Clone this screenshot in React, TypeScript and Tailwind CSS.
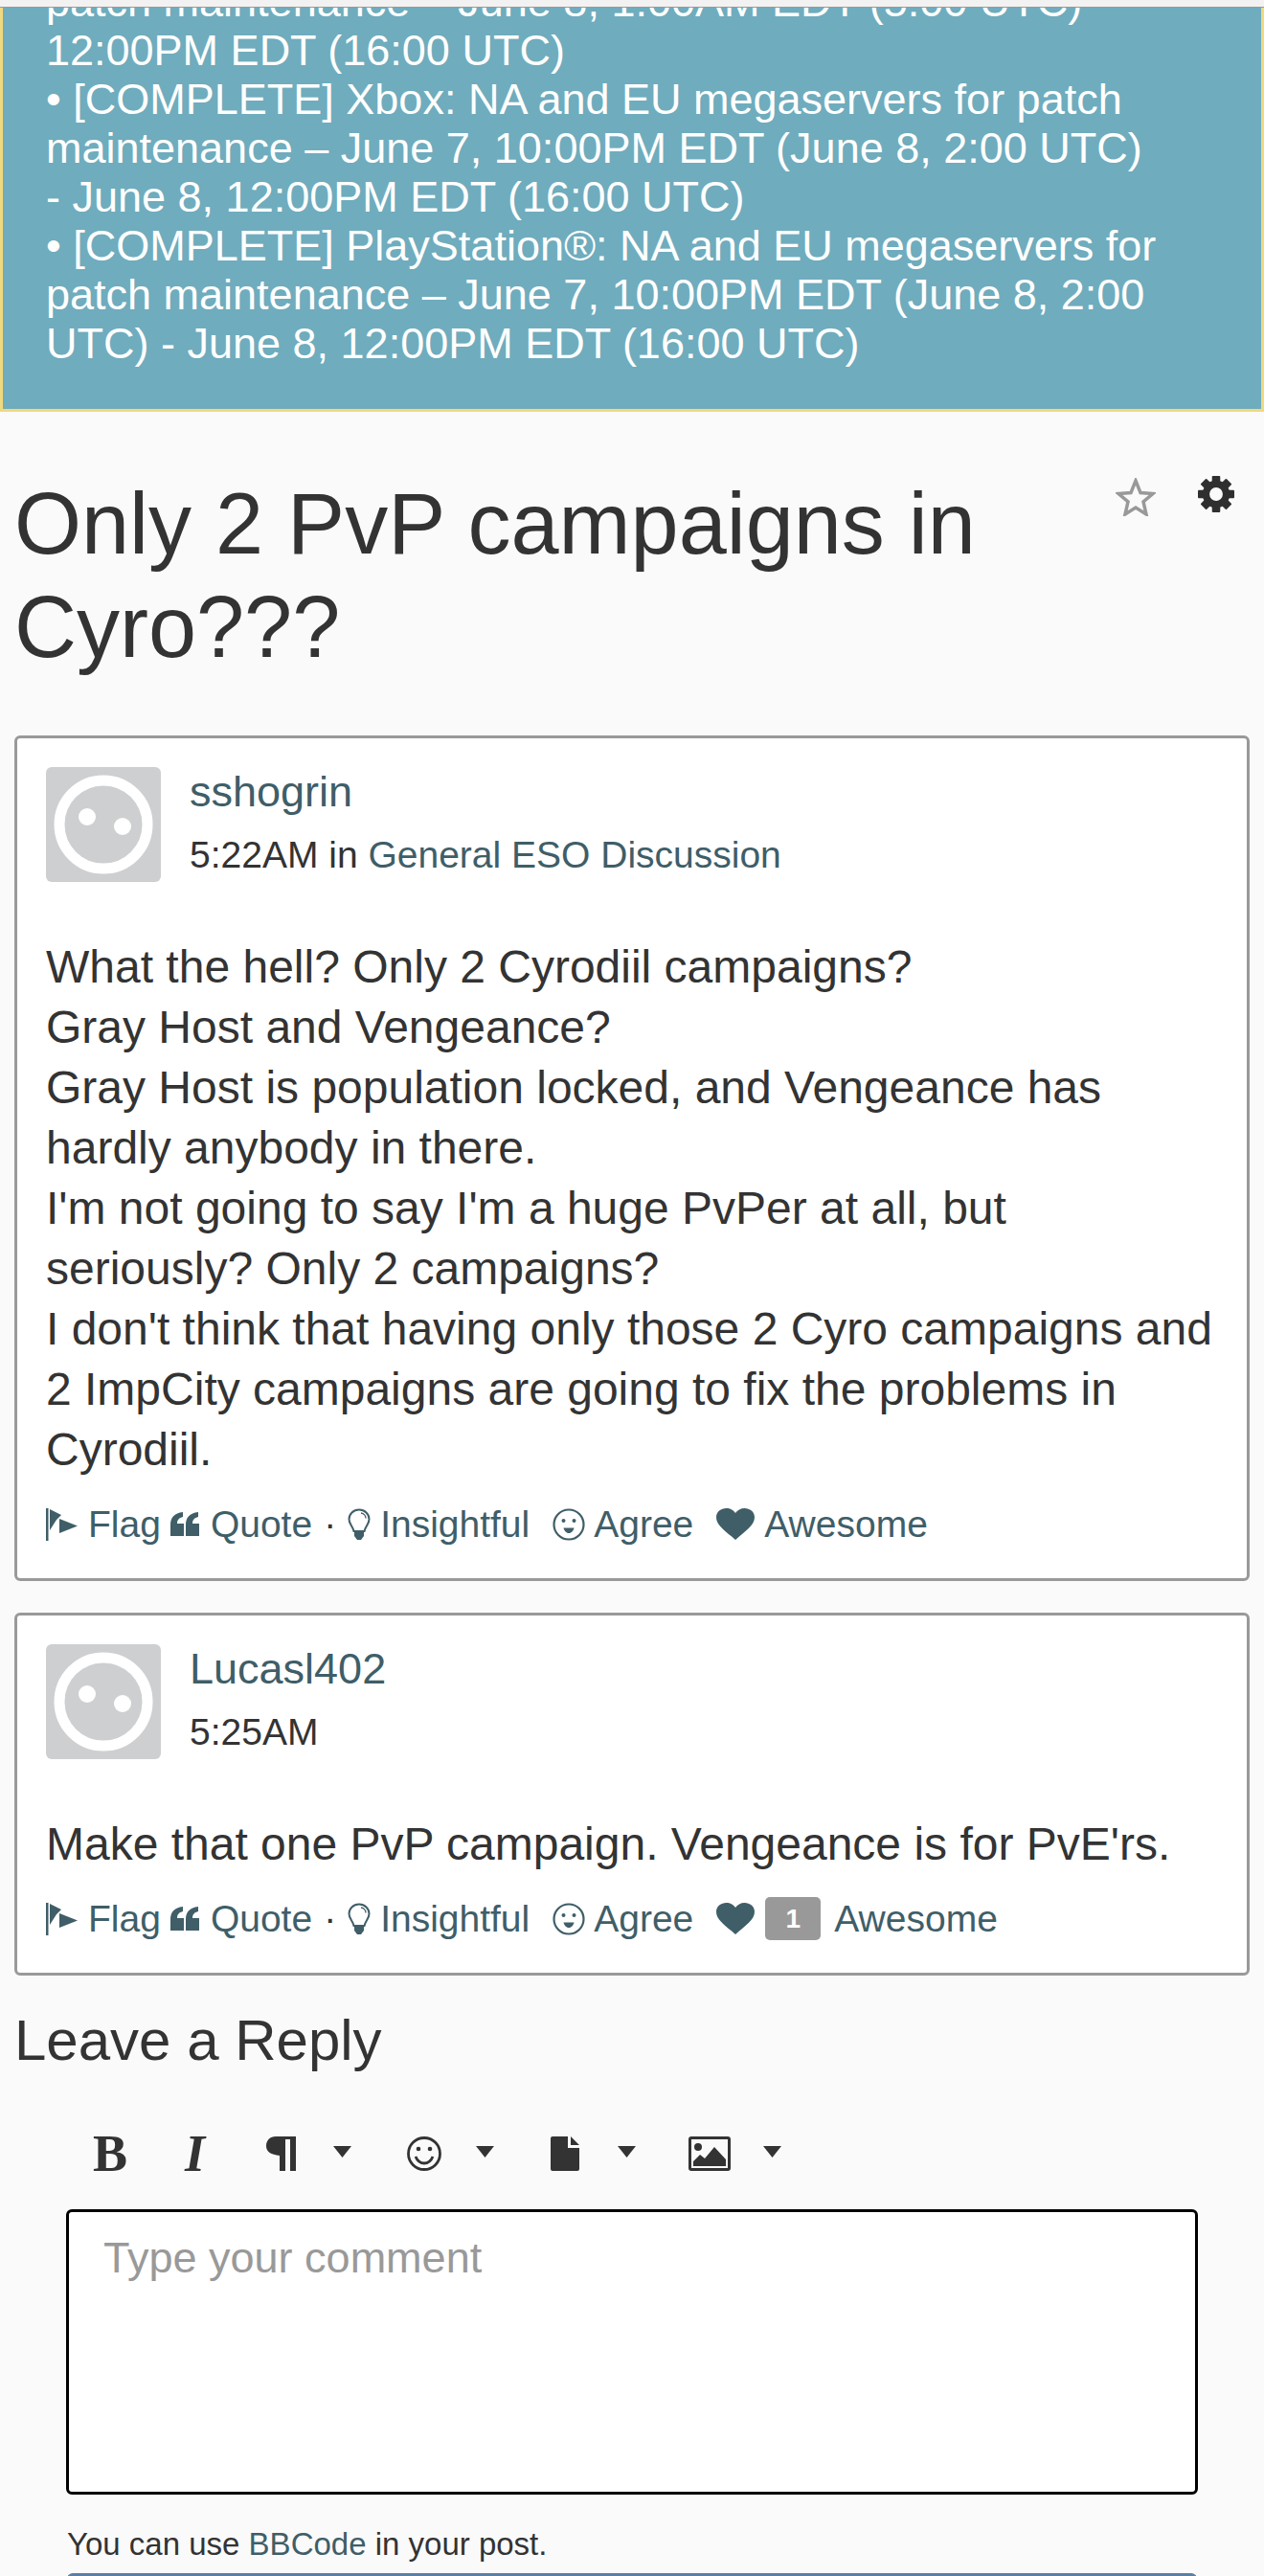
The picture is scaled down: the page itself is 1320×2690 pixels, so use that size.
import React from "react";

const font = "font-['Liberation_Sans',Arial,sans-serif]";

function Avatar() {
  return (
    <div className="w-[120px] h-[120px] shrink-0 rounded-[6px] bg-[#cdcfd1]">
      <svg viewBox="0 0 120 120" className="w-full h-full">
        <circle cx="60" cy="60" r="46" fill="none" stroke="#fff" strokeWidth="11" />
        <circle cx="43" cy="52" r="9" fill="#fff" />
        <circle cx="80" cy="62" r="9" fill="#fff" />
      </svg>
    </div>
  );
}

function FlagIcon() {
  return (
    <svg viewBox="0 0 34 34" className="w-[34px] h-[34px] shrink-0" fill="#3f5e68">
      <rect x="0" y="0" width="2.500" height="34" />
      <polygon points="4,1 16,7 11,12 4,23" />
      <polygon points="14,11 33,18.500 14,26" />
    </svg>
  );
}

function QuoteIcon() {
  return (
    <svg viewBox="0 0 30 25" className="block w-[30px] h-[25px] shrink-0" fill="#3f5e68">
      <path d="M0 25V13C0 6 4 1 13 0v5C9 6 7 8 7 12H14v13z" />
      <path d="M16 25V13C16 6 20 1 29 0v5C25 6 23 8 23 12H30v13z" />
    </svg>
  );
}

function BulbIcon() {
  return (
    <svg viewBox="0 0 24 34" className="w-[24px] h-[34px] shrink-0">
      <path d="M12 1.500C6 1.500 1.500 6 1.500 11.500c0 5 4 7.500 5 12.500h11c1-5 5-7.500 5-12.500C22.500 6 18 1.500 12 1.500z" fill="none" stroke="#3f5e68" strokeWidth="2" />
      <path d="M14 5c3 .5 5 3 5 5.500" fill="none" stroke="#3f5e68" strokeWidth="1.300" />
      <path d="M7 24h10v5l-3 4h-4l-3-4z" fill="#3f5e68" />
    </svg>
  );
}

function SmileIcon() {
  return (
    <svg viewBox="0 0 34 34" className="block w-[34px] h-[34px] shrink-0">
      <circle cx="17" cy="17" r="15.500" fill="none" stroke="#3f5e68" strokeWidth="2.200" />
      <circle cx="11.500" cy="13" r="2" fill="#3f5e68" />
      <circle cx="22.500" cy="13" r="2" fill="#3f5e68" />
      <path d="M11.500 20.500h11c-1 4-3.500 5.500-5.500 5.500s-4.500-1.500-5.500-5.500z" fill="#3f5e68" />
    </svg>
  );
}

function HeartIcon() {
  return (
    <svg viewBox="0 0 40 33" className="block w-[40px] h-[33px] shrink-0" fill="#3f5e68">
      <path d="M20 33C10 24 0 18 0 9.500 0 3.500 5 0 10.500 0 14.500 0 18 2 20 5 22 2 25.500 0 29.500 0 35 0 40 3.500 40 9.500 40 18 30 24 20 33z" />
    </svg>
  );
}

function Actions({ count }: { count?: number }) {
  const link = "text-[39px] leading-[51px] text-[#3f5e68]";
  return (
    <div className={`flex items-center h-[51px] ${link}`}>
      <FlagIcon />
      <span className="ml-[10px]">Flag</span>
      <span className="ml-[10px]"><QuoteIcon /></span>
      <span className="ml-[12px]">Quote</span>
      <span className="mx-[12px] text-[#333]">·</span>
      <BulbIcon />
      <span className="ml-[10px]">Insightful</span>
      <span className="ml-[24px]"><SmileIcon /></span>
      <span className="ml-[9px]">Agree</span>
      <span className="ml-[24px]"><HeartIcon /></span>
      {count ? (
        <span className="ml-[11px] w-[58px] h-[45px] rounded-[5px] bg-[#999] text-white text-[28px] font-bold leading-[45px] text-center">
          {count}
        </span>
      ) : null}
      <span className={count ? "ml-[14px]" : "ml-[10px]"}>Awesome</span>
    </div>
  );
}

function Post({
  name,
  meta,
  category,
  lines,
  count,
}: {
  name: string;
  meta: string;
  category?: string;
  lines: string[];
  count?: number;
}) {
  return (
    <div className="mx-[15px] border-[3px] border-[#999] rounded-[6px] bg-white px-[30px] pt-[30px] pb-[31px]">
      <div className="flex gap-[30px]">
        <Avatar />
        <div>
          <div className="text-[45px] leading-[54px] text-[#3f5e68] mt-[-1px]">{name}</div>
          <div className="text-[39px] leading-[51px] text-[#333] mt-[13px]">
            {meta}
            {category ? (
              <>
                {" in "}
                <span className="text-[#3f5e68]">{category}</span>
              </>
            ) : null}
          </div>
        </div>
      </div>
      <div className="mt-[57px] text-[48px] leading-[63px] text-[#333]">
        {lines.map((l) => (
          <div key={l}>{l}</div>
        ))}
      </div>
      <div className="mt-[21px]">
        <Actions count={count} />
      </div>
    </div>
  );
}

function Caret() {
  return (
    <svg viewBox="0 0 19 12" className="block w-[19px] h-[12px] shrink-0 mt-[-5px]" fill="#333">
      <polygon points="0,0 19,0 9.500,12" />
    </svg>
  );
}

function Toolbar() {
  return (
    <div className="h-[36px] flex items-center pl-[97px] mt-[64px] text-[#333]">
      <span className="font-['Liberation_Serif',serif] font-bold text-[54px] leading-[36px] w-[33px] text-center">B</span>
      <span className="font-['Liberation_Serif',serif] italic font-bold text-[54px] leading-[36px] w-[23px] text-center ml-[62px]">I</span>
      <svg viewBox="0 0 31 36" className="w-[31px] h-[36px] ml-[63px]" fill="#333">
        <path d="M10 0H31V36H25V3H20V36H14V20C5 19 0 16 0 10S4 0 10 0z" />
      </svg>
      <span className="ml-[39px]"><Caret /></span>
      <svg viewBox="0 0 36 36" className="w-[36px] h-[36px] ml-[58px]" fill="none" stroke="#333" strokeWidth="2.800">
        <circle cx="18" cy="18" r="16.500" />
        <circle cx="12" cy="13" r="2.300" fill="#333" stroke="none" />
        <circle cx="24" cy="13" r="2.300" fill="#333" stroke="none" />
        <path d="M9 21c2 5 5 7 9 7s7-2 9-7" />
      </svg>
      <span className="ml-[36px]"><Caret /></span>
      <svg viewBox="0 0 30 36" className="w-[30px] h-[36px] ml-[59px]" fill="#333">
        <path d="M2 0H18V12H30V34a2 2 0 0 1-2 2H2a2 2 0 0 1-2-2V2a2 2 0 0 1 2-2zM21 0L30 9H21z" />
      </svg>
      <span className="ml-[40px]"><Caret /></span>
      <svg viewBox="0 0 44 36" className="w-[44px] h-[36px] ml-[55px]">
        <rect x="1.500" y="1.500" width="41" height="33" rx="1.500" fill="none" stroke="#333" strokeWidth="3" />
        <circle cx="10" cy="11" r="4" fill="#333" />
        <path d="M5 31V26L12 19 17 23 27 11 39 24V31z" fill="#333" />
      </svg>
      <span className="ml-[34px]"><Caret /></span>
    </div>
  );
}

export default function App() {
  return (
    <div className={`${font} w-[1320px] h-[2690px] overflow-hidden bg-[#fafafa] text-[#333]`}>
      <div className="h-[8px] bg-[#f2f2f2] border-b border-[#999]" />
      <div className="h-[422px] overflow-hidden flex flex-col justify-end bg-[#6facbd] border-x-[3px] border-b-[3px] border-[#f0d97e] px-[45px] pb-[43px] text-white text-[45px] leading-[51px]">
        <div className="shrink-0">
          <div>patch maintenance – June 8, 1:00AM EDT (5:00 UTC) -</div>
          <div>12:00PM EDT (16:00 UTC)</div>
          <div>• [COMPLETE] Xbox: NA and EU megaservers for patch</div>
          <div>maintenance – June 7, 10:00PM EDT (June 8, 2:00 UTC)</div>
          <div>- June 8, 12:00PM EDT (16:00 UTC)</div>
          <div>• [COMPLETE] PlayStation®: NA and EU megaservers for</div>
          <div>patch maintenance – June 7, 10:00PM EDT (June 8, 2:00</div>
          <div>UTC) - June 8, 12:00PM EDT (16:00 UTC)</div>
        </div>
      </div>

      <div className="relative px-[15px] pt-[63px] text-[90px] leading-[108px] text-[#333]">
        <div>Only 2 PvP campaigns in</div>
        <div>Cyro???</div>
        <svg viewBox="0 0 42 40" className="absolute right-[113px] top-[69px] w-[42px] h-[40px]" fill="none" stroke="#999" strokeWidth="3.500" strokeLinejoin="miter">
          <polygon points="21,3 26,15.500 39,16.500 29,25 32,38 21,31 10,38 13,25 3,16.500 16,15.500" />
        </svg>
        <svg viewBox="0 0 40 40" className="absolute right-[31px] top-[67px] w-[38px] h-[38px]" fill="#2f2f2f">
          <g>
            {[0, 45, 90, 135, 180, 225, 270, 315].map((a) => (
              <rect key={a} x="15.500" y="0" width="9" height="10" rx="1" transform={`rotate(${a} 20 20)`} />
            ))}
          </g>
          <path fillRule="evenodd" d="M20 5a15 15 0 1 0 0 30a15 15 0 1 0 0-30zM20 12.700a7.300 7.300 0 1 1 0 14.600a7.300 7.300 0 1 1 0-14.600z" />
        </svg>
      </div>

      <div className="mt-[59px] flex flex-col gap-[33px]">
        <Post
          name="sshogrin"
          meta="5:22AM"
          category="General ESO Discussion"
          lines={[
            "What the hell? Only 2 Cyrodiil campaigns?",
            "Gray Host and Vengeance?",
            "Gray Host is population locked, and Vengeance has",
            "hardly anybody in there.",
            "I'm not going to say I'm a huge PvPer at all, but",
            "seriously? Only 2 campaigns?",
            "I don't think that having only those 2 Cyro campaigns and",
            "2 ImpCity campaigns are going to fix the problems in",
            "Cyrodiil.",
          ]}
        />
        <Post
          name="Lucasl402"
          meta="5:25AM"
          lines={["Make that one PvP campaign. Vengeance is for PvE'rs."]}
          count={1}
        />
      </div>

      <div className="mt-[32px] ml-[15px] text-[60px] leading-[72px] text-[#333]">Leave a Reply</div>
      <Toolbar />
      <div className="mt-[40px] mx-[69px] h-[298px] border-[3px] border-black rounded-[6px] bg-white px-[36px] py-[22px] text-[45px] leading-[51px] text-[#999]">
        Type your comment
      </div>
      <div className="mt-[29px] mx-[70px] text-[33px] leading-[45px] text-[#333]">
        You can use <span className="text-[#3f5e68]">BBCode</span> in your post.
      </div>
      <div className="mt-[8px] mx-[70px] h-[40px] rounded-[6px] bg-[#5b7ea6]" />
    </div>
  );
}
